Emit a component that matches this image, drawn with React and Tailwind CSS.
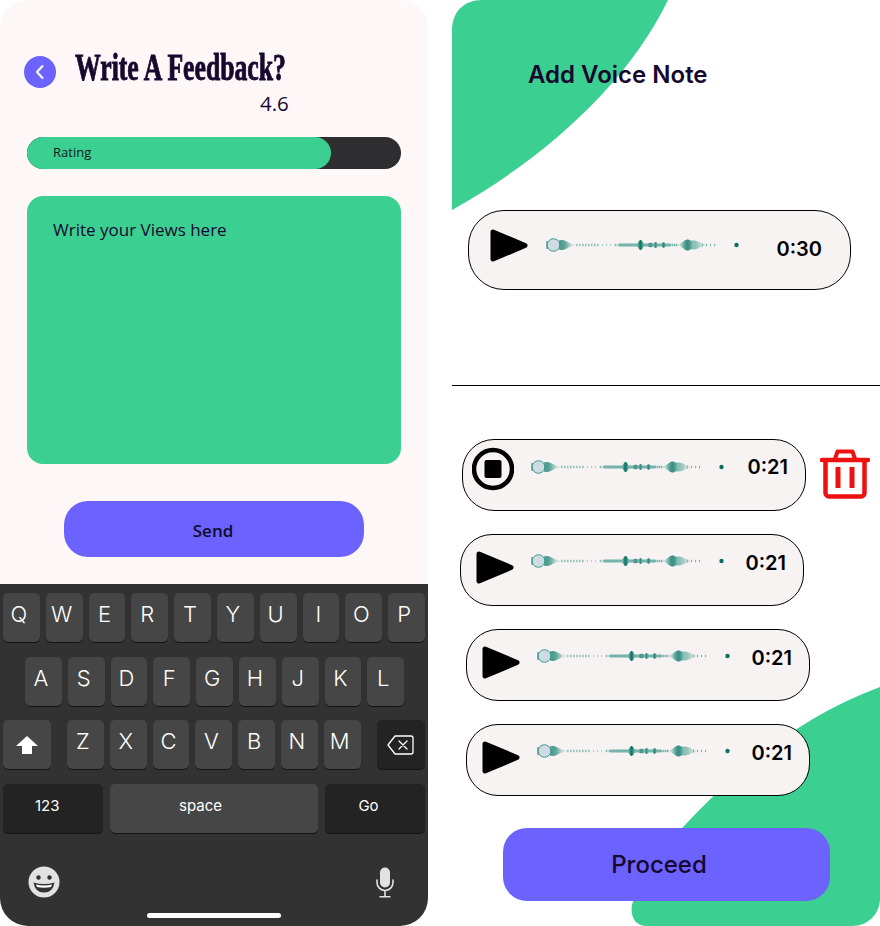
import React from "react";

const inter = "font-['Inter',sans-serif]";
const open = "font-['Open_Sans',sans-serif]";

function Key({ children, className = "" }) {
  return (
    <div className={`h-[49px] rounded-[5px] bg-[#464646] shadow-[0_1px_0_#141414] flex items-center justify-center text-white ${className}`}>
      {children}
    </div>
  );
}

function Letter({ c }) {
  return (
    <Key className="w-[36.8px] shrink-0 pr-[5px] pb-[6px] text-[22px] font-light">
      {c}
    </Key>
  );
}

const bars = [];
const peaks = [
  [15, 10, 0.7, 6],
  [94, 10, 1, 2.2],
  [104, 4.5, 0.75, 3],
  [109, 6, 0.8, 1.6],
  [117, 5.5, 0.85, 1.8],
  [141, 11, 0.8, 4.5],
  [147, 9, 0.4, 6],
];
for (let x = 13; x < 170; x += 1) {
  let h = 1;
  let o = 0;
  for (const [px, ph, po, s] of peaks) {
    const e = Math.exp(-((x - px) * (x - px)) / (2 * s * s));
    h = Math.max(h, ph * e);
    o = Math.max(o, po * e);
  }
  let base = 0;
  if (x >= 30 && x < 54) base = x % 3 === 0 ? 0.4 : x % 3 === 1 ? 0.2 : 0;
  else if (x >= 54 && x < 68) base = x % 4 === 0 ? 0.28 : 0;
  else if (x >= 68 && x < 124) base = x < 73 ? (x % 3 === 0 ? 0.45 : 0.15) : 0.5;
  else if (x >= 124 && x < 132) base = x % 2 === 0 ? 0.5 : 0.2;
  else if (x >= 156) base = x % 4 === 0 ? 0.5 : 0;
  o = Math.max(o, base);
  if (o > 0.03) bars.push([x, Math.max(h, x >= 73 && x < 124 ? 3 : 2.4), o]);
}

function Wave() {
  return (
    <svg width="196" height="16" viewBox="0 0 196 16" className="shrink-0 block">
      <filter id="soft" x="-5%" y="-30%" width="110%" height="160%">
        <feGaussianBlur stdDeviation="0.7" />
      </filter>
      <g filter="url(#soft)">
        {bars.map(([x, h, o]) => (
          <rect key={x} x={x} y={8 - h / 2} width="1.1" height={h} fill="#0b7a6b" opacity={o} />
        ))}
      </g>
      <circle cx="190.5" cy="8" r="2.2" fill="#0b6f62" />
      <path d="M1 4 V12" stroke="#0b7a6b" strokeWidth="1" />
      <circle cx="7.5" cy="8" r="6.3" fill="#cfdbe3" stroke="#1a8a7c" strokeWidth="0.8" />
    </svg>
  );
}

function Play() {
  return (
    <svg width="38" height="33" viewBox="0 0 38 33" className="shrink-0 block">
      <path d="M3 3 L35 16.5 L3 30 Z" fill="#000" stroke="#000" strokeWidth="5" strokeLinejoin="round" />
    </svg>
  );
}

function Stop() {
  return (
    <svg width="42" height="44" viewBox="0 0 42 44" className="shrink-0 block">
      <circle cx="21" cy="22" r="19" fill="none" stroke="#000" strokeWidth="4.5" />
      <rect x="12.5" y="13" width="17" height="18" rx="2" fill="#000" />
    </svg>
  );
}

function Trash() {
  return (
    <svg width="50" height="50" viewBox="0 0 50 50" className="shrink-0 block" fill="none" stroke="#ee1111">
      <path d="M2 11 H48" strokeWidth="4.5" strokeLinecap="round" />
      <path d="M15 10 L17.5 2.5 H32.5 L35 10" strokeWidth="4" strokeLinejoin="round" />
      <path d="M5.5 12 V44 a3.5 3.5 0 0 0 3.5 3.5 H41 a3.5 3.5 0 0 0 3.5 -3.5 V12" strokeWidth="4.5" />
      <path d="M18 18 V39 M32 18 V39" strokeWidth="5" />
    </svg>
  );
}

function Note({ icon, time, ml, iconMl = "ml-[15px]", iconMb = "mb-[5px]", waveMl = "ml-[17px]", waveMb = "mb-[19px]", timeTop = "top-[16px]" }) {
  return (
    <div className={`relative z-10 w-[344px] h-[72px] shrink-0 rounded-[32px] border border-black bg-[#f6f3f2] flex items-center ${ml}`}>
      <div className={`${iconMl} ${iconMb}`}>{icon}</div>
      <div className={`${waveMl} ${waveMb}`}>
        <Wave />
      </div>
      <span className={`${inter} absolute right-[17px] ${timeTop} text-[20px] leading-[24px] font-semibold text-black`}>{time}</span>
    </div>
  );
}

export default function App() {
  return (
    <div className="w-[880px] h-[926px] bg-white flex overflow-hidden">
      <div className="w-[428px] h-[926px] shrink-0 rounded-[28px] bg-[#fdf8f7] overflow-hidden flex flex-col">
        <div className="flex items-start pl-[24px] pt-[50px] h-[92px] shrink-0">
          <div className="mt-[6px] w-[32px] h-[32px] rounded-full bg-[#6c63ff] flex items-center justify-center">
            <svg width="12" height="16" viewBox="0 0 12 16" fill="none" stroke="#fff" strokeWidth="2" strokeLinecap="round" strokeLinejoin="round">
              <path d="M8.5 2 L3 8 L8.5 14" />
            </svg>
          </div>
          <h1 className="ml-[19px] origin-left scale-x-[.695] whitespace-nowrap font-['Liberation_Serif',serif] text-[37px] leading-[36px] font-bold text-[#16082f] [-webkit-text-stroke:0.9px_#16082f]">
            Write A Feedback?
          </h1>
        </div>
        <div className={`${open} ml-[260px] h-[22px] text-[20.5px] leading-[22px] text-[#16082f]`}>4.6</div>
        <div className="mx-[27px] mt-[23px] h-[32px] rounded-full bg-[#2e2d30] shrink-0">
          <div className={`${open} w-[304px] h-[32px] rounded-full bg-[#3bcf91] flex items-center pl-[26px] text-[13px] text-[#10201a]`}>Rating</div>
        </div>
        <div className={`${open} mx-[27px] mt-[27px] h-[268px] shrink-0 rounded-[16px] bg-[#3bcf91] pl-[26px] pt-[23px] text-[17px] leading-[22px] text-[#16082f]`}>
          Write your Views here
        </div>
        <div className={`${open} mx-[64px] mt-[37px] h-[56px] shrink-0 rounded-[24px] bg-[#6c63ff] flex items-center justify-center pt-[4px] pr-[2px] text-[17px] font-semibold text-[#0f0a26]`}>
          Send
        </div>

        <div className={`${inter} mt-[27px] flex-1 bg-[#323232] flex flex-col pt-[9px]`}>
          <div className="flex gap-[6px] pl-[3px]">
            {"QWERTYUIOP".split("").map((c) => (
              <Letter key={c} c={c} />
            ))}
          </div>
          <div className="flex gap-[6px] pl-[25px] mt-[15px]">
            {"ASDFGHJKL".split("").map((c) => (
              <Letter key={c} c={c} />
            ))}
          </div>
          <div className="flex gap-[6px] pl-[3px] mt-[14px]">
            <Key className="w-[48px] shrink-0 mr-[10px]">
              <svg width="22" height="18" viewBox="0 0 22 18" fill="#fff">
                <path d="M11 0 L22 10 H16 V18 H6 V10 H0 Z" />
              </svg>
            </Key>
            {"ZXCVBNM".split("").map((c) => (
              <Letter key={c} c={c} />
            ))}
            <Key className="w-[48px] shrink-0 ml-[10px] !bg-[#232323]">
              <svg width="27" height="20" viewBox="0 0 27 20" fill="none" stroke="#fff" strokeWidth="1.3" strokeLinejoin="round">
                <path d="M8 1 H24 a2 2 0 0 1 2 2 V17 a2 2 0 0 1 -2 2 H8 L1 10 Z" />
                <path d="M12 6 L20 14 M20 6 L12 14" strokeLinecap="round" />
              </svg>
            </Key>
          </div>
          <div className="flex gap-[7px] pl-[3px] mt-[15px] text-[15px]">
            <Key className="w-[99.5px] shrink-0 !bg-[#232323] pr-[11px] pb-[5px]">123</Key>
            <Key className="w-[208px] shrink-0 pr-[26px] pb-[5px]">space</Key>
            <Key className="w-[100px] shrink-0 !bg-[#232323] pb-[5px] pr-[12px]">Go</Key>
          </div>
          <div className="flex items-center justify-between pl-[28px] pr-[34px] mt-[33px]">
            <svg width="32" height="32" viewBox="0 0 32 32">
              <circle cx="16" cy="16" r="15.5" fill="#e2e2e2" />
              <circle cx="10.5" cy="11.5" r="2.2" fill="#323232" />
              <circle cx="21.5" cy="11.5" r="2.2" fill="#323232" />
              <path d="M5.5 16.5 Q16 19.5 26.5 16.5 Q25 26.5 16 26.5 Q7 26.5 5.5 16.5 Z" fill="#323232" />
              <path d="M8 18.5 Q16 20.5 24 18.5 L23 21 Q16 22.5 9 21 Z" fill="#fff" />
            </svg>
            <svg width="18" height="31" viewBox="0 0 18 31" fill="none">
              <rect x="4" y="0.5" width="10" height="20" rx="5" fill="#e2e2e2" />
              <path d="M1 13 V15.5 a8 8 0 0 0 16 0 V13" stroke="#e2e2e2" strokeWidth="1.6" strokeLinecap="round" />
              <path d="M9 23.5 V29.5 M3.5 29.8 H14.5" stroke="#e2e2e2" strokeWidth="1.6" />
            </svg>
          </div>
          <div className="mx-auto mt-[15px] w-[134px] h-[5px] rounded-full bg-white" />
        </div>
      </div>

      <div className="relative ml-[24px] w-[428px] h-[926px] shrink-0 flex flex-col">
        <svg width="428" height="926" viewBox="0 0 428 926" className="absolute inset-0" fill="#3bcf91">
          <path d="M0 210 C90 160 175 85 216 0 H30 C12 0 0 12 0 30 Z" />
          <path d="M428 687 C340 720 280 775 230 828 C205 855 185 885 180 905 C178 918 184 926 195 926 H400 C416 926 428 914 428 898 Z" />
        </svg>

        <div className={`${inter} relative z-10 ml-[76px] mt-[60px] h-[30px] text-[24px] leading-[30px] font-semibold text-[#16082f]`}>Add Voice Note</div>

        <div className="relative z-10 ml-[16px] mt-[120px] w-[383px] h-[80px] shrink-0 rounded-[36px] border border-black bg-[#f6f3f2] flex items-center">
          <div className="ml-[21px] mb-[10px]"><Play /></div>
          <div className="ml-[18px] mb-[10px]"><Wave /></div>
          <span className={`${inter} absolute right-[28px] top-[26px] text-[20px] leading-[24px] font-semibold text-black`}>0:30</span>
        </div>

        <div className="relative z-10 mt-[95px] h-px shrink-0 bg-black" />

        <div className="flex items-center mt-[53px] h-[72px] shrink-0">
          <Note icon={<Stop />} time="0:21" ml="ml-[10px]" iconMl="ml-[9px]" iconMb="mb-[12px]" waveMl="ml-[17px]" waveMb="mb-[17px]" timeTop="top-[15px]" />
          <div className="ml-[14px] mb-[3px]"><Trash /></div>
        </div>
        <div className="mt-[23px]"><Note icon={<Play />} time="0:21" ml="ml-[8px]" /></div>
        <div className="mt-[23px]"><Note icon={<Play />} time="0:21" ml="ml-[14px]" /></div>
        <div className="mt-[23px]"><Note icon={<Play />} time="0:21" ml="ml-[14px]" /></div>

        <div className={`${inter} relative z-10 ml-[51px] mt-[32px] w-[327px] h-[73px] shrink-0 rounded-[24px] bg-[#6c63ff] flex items-center justify-center pr-[15px] text-[24px] font-medium text-[#16082f]`}>
          Proceed
        </div>
      </div>
    </div>
  );
}
